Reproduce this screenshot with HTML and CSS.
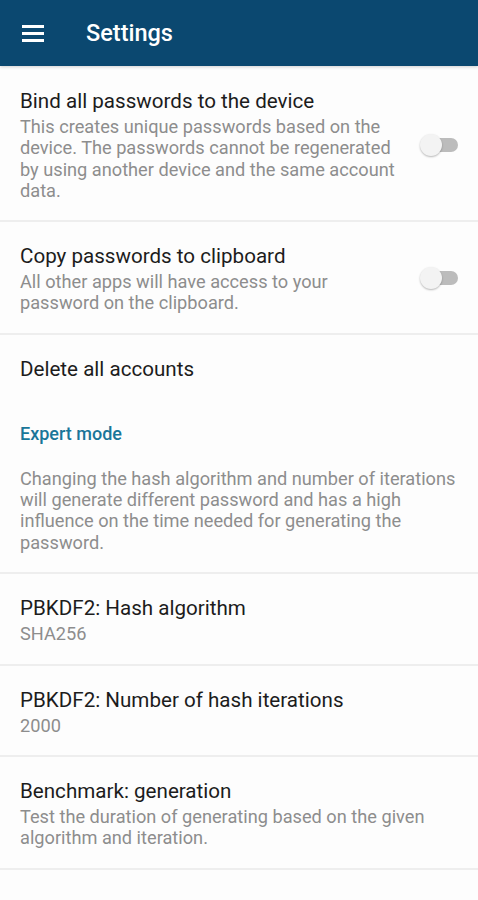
FILE: index.html
```html
<!DOCTYPE html>
<html>
<head>
<meta charset="utf-8">
<link rel="stylesheet" href="styles.css">
</head>
<body>
<header class="appbar">
  <svg class="menu" width="22" height="17" viewBox="0 0 22 17"><rect x="0" y="0" width="22" height="3" fill="#fff"/><rect x="0" y="7" width="22" height="3" fill="#fff"/><rect x="0" y="14" width="22" height="3" fill="#fff"/></svg>
  <h1 class="title">Settings</h1>
</header>
<main class="list">
  <div class="item with-switch">
    <div class="text">
      <div class="item-title">Bind all passwords to the device</div>
      <div class="item-summary">This creates unique passwords based on the device. The passwords cannot be regenerated by using another device and the same account data.</div>
    </div>
    <div class="switch"><span class="track"></span><span class="thumb"></span></div>
  </div>
  <div class="item with-switch">
    <div class="text">
      <div class="item-title">Copy passwords to clipboard</div>
      <div class="item-summary">All other apps will have access to your password on the clipboard.</div>
    </div>
    <div class="switch"><span class="track"></span><span class="thumb"></span></div>
  </div>
  <div class="item plain">
    <div class="item-title">Delete all accounts</div>
  </div>
  <div class="category">Expert mode</div>
  <div class="item note">
    <div class="item-summary">Changing the hash algorithm and number of iterations will generate different password and has a high influence on the time needed for generating the password.</div>
  </div>
  <div class="item">
    <div class="item-title">PBKDF2: Hash algorithm</div>
    <div class="item-summary">SHA256</div>
  </div>
  <div class="item">
    <div class="item-title">PBKDF2: Number of hash iterations</div>
    <div class="item-summary">2000</div>
  </div>
  <div class="item">
    <div class="item-title">Benchmark: generation</div>
    <div class="item-summary">Test the duration of generating based on the given algorithm and iteration.</div>
  </div>
</main>
</body>
</html>
```

FILE: styles.css
```css
* { box-sizing: border-box; }
html, body { margin: 0; padding: 0; }
body {
  width: 478px;
  height: 900px;
  background: #fdfdfd;
  font-family: Roboto, "Liberation Sans", sans-serif;
  overflow: hidden;
}
.appbar {
  height: 66px;
  background: #0b4870;
  display: flex;
  align-items: center;
  padding-left: 22px;
  box-shadow: 0 1px 3px rgba(0,0,0,0.18);
  position: relative;
  z-index: 1;
}
.menu { flex: none; margin-top: 1px; }
.title {
  margin: 0 0 0 42px;
  color: #fff;
  font-size: 23.5px;
  font-weight: 500;
}
.list { display: flex; flex-direction: column; padding-top: 1px; }
.item {
  padding: 21px 20px 19px 20px;
  border-bottom: 2px solid #eeeeee;
}
.item.with-switch {
  display: flex;
  align-items: center;
  gap: 16px;
}
.item .text { flex: 1; min-width: 0; }
.item-title {
  font-size: 20.6px;
  line-height: 26px;
  color: #1c1c1c;
}
.item-summary {
  margin-top: 2px;
  font-size: 18.2px;
  line-height: 21.3px;
  color: #8d8d8d;
}
.item.plain { border-bottom: none; }
.category {
  padding: 22px 20px 0 20px;
  line-height: 21px;
  font-size: 18px;
  font-weight: 500;
  color: #1a7699;
}
.item.note { padding-top: 22px; padding-bottom: 19.5px; }
.switch {
  position: relative;
  width: 40px;
  height: 24px;
  flex: none;
}
.track {
  position: absolute;
  left: 6px;
  right: 0;
  top: 5px;
  height: 14px;
  border-radius: 7px;
  background: #bcbcbc;
}
.thumb {
  position: absolute;
  left: 2px;
  top: 1px;
  width: 22px;
  height: 22px;
  border-radius: 50%;
  background: #f3f3f3;
  box-shadow: 0 1px 2px rgba(0,0,0,0.28);
}
```
